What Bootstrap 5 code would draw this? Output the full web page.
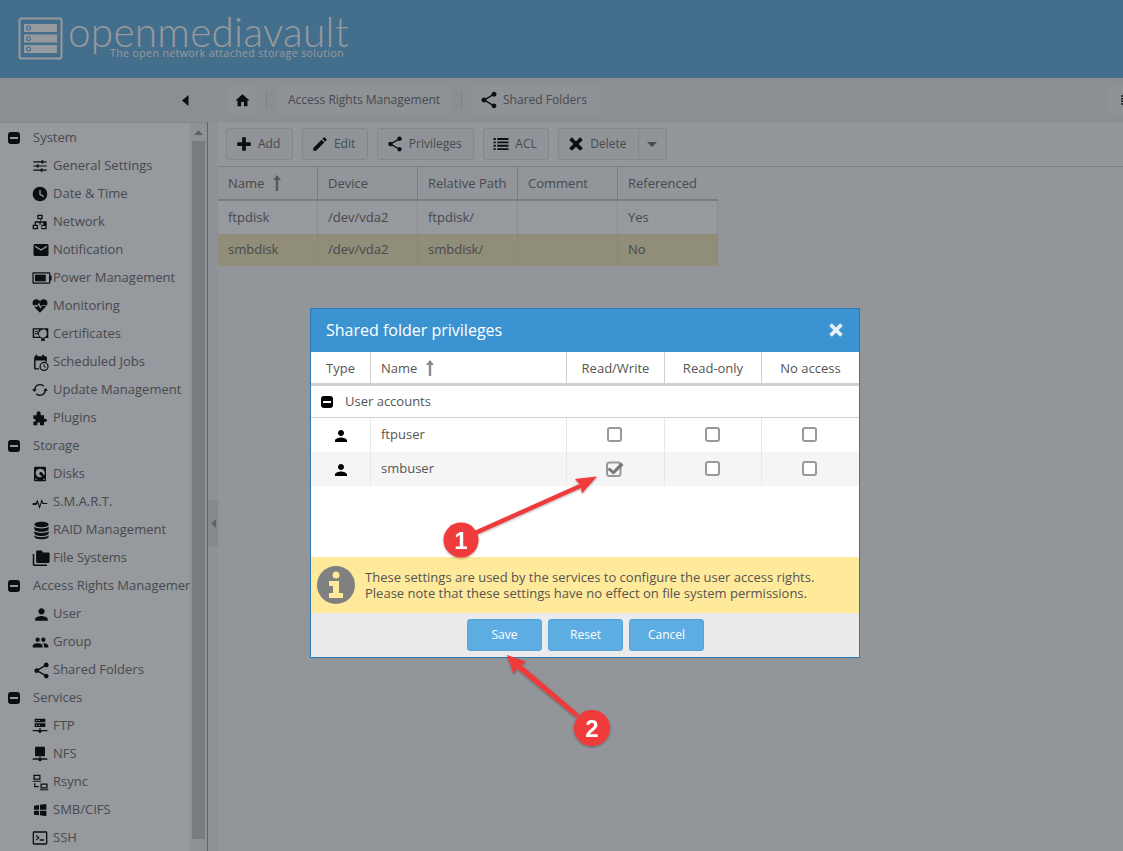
<!DOCTYPE html>
<html lang="en">
<head>
<meta charset="UTF-8">
<meta name="viewport" content="width=device-width, initial-scale=1.0">
<title>openmediavault - Shared folder privileges</title>
<link href="https://cdn.jsdelivr.net/npm/bootstrap@5.3.0/dist/css/bootstrap.min.css" rel="stylesheet">
<style>
  html, body { height: 100%; overflow: hidden; }
  body { font-family: "Open Sans", "Liberation Sans", sans-serif; font-size: 13px; color: #6e6e6e; background: #fff; }
  svg.ico { fill: #000; flex: none; }

  /* top banner */
  .omv-head { height: 78px; background: #68b0e0; padding-left: 18px; padding-top: 17px; color: #fff; }
  .omv-logo-text { font-family: "Lato", "Open Sans", sans-serif; font-weight: 300; font-size: 40.5px; line-height: 30px; height: 30px; letter-spacing: .25px; margin-left: 4px; }
  .omv-logo-sub { font-size: 10.5px; line-height: 12px; letter-spacing: .42px; margin-left: 46px; white-space: nowrap; }

  /* breadcrumb strip */
  .omv-strip { height: 44px; background: #ebebeb; }
  .omv-strip-left { width: 218px; padding-right: 29px; }
  .omv-crumbs { padding-left: 9px; }
  .omv-crumb { height: 30px; background: #f2f2f2; border: 1px solid #eee; border-radius: 3px; padding: 0 11px; white-space: nowrap; color: #6e6e6e; font-size: 12px; }
  .omv-crumb-home { width: 30px; padding: 0; }
  .omv-crumb-share { padding: 0 12px 0 7px; }
  .omv-crumb-share svg { margin-right: 4px; }
  .omv-crumb-sep { width: 1px; height: 14px; background: #ccc; margin: 0 9px; }
  .omv-crumb-end { width: 30px; margin-right: -14px; padding: 0 0 0 12px; }

  /* tree */
  .omv-main { height: 729px; background: #f7f7f7; }
  .omv-side { width: 208px; border-top: 1px solid #dcdcdc; border-right: 1px solid #7fa8cc; background: #fff; overflow: hidden; }
  .omv-tree { width: 190px; overflow: hidden; padding-top: 1px; }
  .omv-tree-row { height: 28px; white-space: nowrap; }
  .omv-tree-group { padding-left: 8px; }
  .omv-tree-group .omv-minus { margin-right: 13px; }
  .omv-tree-item { padding-left: 32px; }
  .omv-tree-icon { width: 21px; display: flex; }
  .omv-scroll { width: 17px; background: #f1f1f1; padding: 0 2px; }
  .omv-scroll-up { height: 18px; }
  .omv-scroll-thumb { height: 698px; background: #c8c8c8; }
  .omv-split { width: 10px; background: #f0f0f0; }
  .omv-split-handle { width: 10px; height: 47px; background: #e2e2e2; margin-top: 378px; }
  .omv-minus { width: 12px; height: 12px; background: #000; border-radius: 3px; padding: 0 2px; flex: none; }
  .omv-minus::after { content: ""; display: block; width: 100%; height: 2px; background: #fff; }

  /* toolbar */
  .omv-tools { height: 45px; padding: 6px 0 0 8px; gap: 9px; background: #fafafa; border-bottom: 1px solid #ccc; }
  .omv-tool { height: 32px; background: #f5f5f5; border: 1px solid #ddd; border-radius: 3px; padding: 0 11.6px 0 9px; color: #6e6e6e; white-space: nowrap; font-size: 12px; }
  .omv-tool > svg { width: 18px; height: 18px; margin: 0 5px 0 -1px; }
  .omv-tool-arrow { width: 28px; border-left: 1px solid #ddd; height: 100%; margin-left: 11px; }
  .omv-tool-del { padding-right: 0; }
  .omv-caret { width: 0; height: 0; border-left: 5px solid transparent; border-right: 5px solid transparent; border-top: 5px solid #6e6e6e; }

  /* grids */
  .omv-grid { table-layout: fixed; border-collapse: separate; border-spacing: 0; margin: 0; }
  .omv-grid th, .omv-grid td { padding: 0 10px; font-weight: 400; font-size: 13px; vertical-align: middle; background: transparent; box-shadow: none; color: #6e6e6e; }
  .omv-sorted svg { margin-left: 4px; vertical-align: -3px; }
  .omv-files { width: 500px; }
  .omv-files th { height: 34px; padding-top: 1px; border-bottom: 2px solid #ccc; border-right: 1px solid #ccc; }
  .omv-files td { height: 33px; border-bottom: 0; border-right: 1px solid #e9e9e9; background: #fff; }
  .omv-files tr.omv-picked td { height: 32px; background: #f4e9bc; border-right-color: #e9dfb0; }

  /* mask and dialog */
  .omv-mask { position: fixed; inset: 0; background: rgba(25, 30, 40, .456); }
  .omv-win { position: absolute; left: 310px; top: 308px; width: 550px; height: 350px; background: #fff; border: 1px solid #2d7ab5; }
  .omv-win-title { height: 43px; background: #3b94d1; color: #fff; font-size: 16px; padding: 0 14px 2px 15px; }
  .omv-win .omv-grid { width: 548px; }
  .omv-win .omv-grid th, .omv-win .omv-grid td { color: #555; }
  .omv-win .omv-grid th { height: 34px; padding-top: 2px; border-bottom: 3px solid #d0d0d0; border-right: 1px solid #d0d0d0; text-align: center; }
  .omv-win .omv-grid th:last-child, .omv-win .omv-grid td:last-child { border-right: 0; }
  .omv-win .omv-grid th.omv-left { text-align: left; }
  .omv-win td.omv-group { height: 32px; border-bottom: 1px solid #d0d0d0; }
  .omv-group-label { gap: 12px; }
  .omv-win td.omv-cell { height: 34px; border-bottom: 0; border-right: 1px solid #e8e8e8; text-align: center; }
  .omv-win tr.omv-alt td { background: #f5f5f5; }
  .omv-win td.omv-name { text-align: left; }
  .omv-win .omv-grid td.omv-pick { padding: 0 11px 2px 9px; }
  .omv-box { width: 15px; height: 15px; border: 2px solid #999; border-radius: 3px; display: inline-block; vertical-align: middle; background: #fff; }
  .omv-check { display: inline-block; vertical-align: middle; }
  .omv-win-space { height: 71px; }
  .omv-note { height: 56px; background: #ffe99a; padding-left: 6px; color: #555; line-height: 16px; font-size: 13px; }
  .omv-note svg { margin-right: 10px; }
  .omv-win-foot { height: 44px; background: #ebebeb; gap: 6px; padding-left: 156px; padding-top: 6px; }
  .omv-win-btn { width: 75px; height: 32px; background: #5dade2; border: 1px solid #54a5da; border-radius: 3px; color: #fff; font-size: 12px; padding: 0; }
  .omv-win-btn:hover { background: #5dade2; color: #fff; }
  .omv-notes { position: fixed; inset: 0; pointer-events: none; }
  .omv-notes text { font-family: "Liberation Sans", sans-serif; font-weight: 700; font-size: 24px; fill: #fff; text-anchor: middle; }
</style>
</head>
<body>

<svg width="0" height="0" class="position-absolute">
  <defs>
    <symbol id="i-home" viewBox="0 0 24 24"><path d="M10 20v-6h4v6h5v-8h3L12 3 2 12h3v8z"/></symbol>
    <symbol id="i-sliders" viewBox="0 0 24 24"><path d="M2 5h20v1.600H2zM2 11.200h20v1.600H2zM2 17.400h20V19H2z"/><rect x="14" y="3.400" width="3" height="4.800" rx=".6"/><rect x="7" y="9.600" width="3" height="4.800" rx=".6"/><rect x="13" y="15.800" width="3" height="4.800" rx=".6"/></symbol>
    <symbol id="i-clock" viewBox="0 0 24 24"><path fill-rule="evenodd" d="M12 1a11 11 0 1 0 0 22 11 11 0 0 0 0-22zm-1 5h2v6l5 3-1 1.700-6-3.700z"/></symbol>
    <symbol id="i-net" viewBox="0 0 24 24"><path fill-rule="evenodd" d="M8 1h8v7h-3v3h9v5h-.0v7h-8v-7h3v-3H13v3h-2v-3H6v3h3v7H1v-7h3v-5h8V8H8zm2 2v3h4V3zM3 18v3h4v-3zm14 0h-2v3h5v-3z"/></symbol>
    <symbol id="i-mail" viewBox="0 0 24 24"><path d="M20 4H4c-1.100 0-2 .9-2 2v12c0 1.100.9 2 2 2h16c1.100 0 2-.9 2-2V6c0-1.100-.9-2-2-2zm0 4l-8 5-8-5V6l8 5 8-5v2z"/></symbol>
    <symbol id="i-batt" viewBox="0 0 24 16"><path fill-rule="evenodd" d="M1.500 1h19.500a1 1 0 0 1 1 1v3h1.500v6H22v3a1 1 0 0 1-1 1H1.500a1 1 0 0 1-1-1V2a1 1 0 0 1 1-1zm.5 1.500v11h18.500v-11z"/><rect x="3.500" y="4" width="13" height="8"/></symbol>
    <symbol id="i-heart" viewBox="0 0 24 24"><path d="M12 22 3 13h5l1.500-3 3 6 2.500-4h6.500zM1.700 11C1 9.800.8 8.700.8 7.500.8 4.400 3.300 2 6.300 2c2.300 0 4.600 1.300 5.700 3.300C13.100 3.300 15.400 2 17.700 2c3 0 5.500 2.400 5.500 5.500 0 1.200-.2 2.300-.9 3.500h-7.400l-1.400 2.200-3-6L8 11z"/></symbol>
    <symbol id="i-cert" viewBox="0 0 24 24"><path fill-rule="evenodd" d="M1 3h22v14h-5v5l-2.500-1.500L13 22v-5H1zm2 2v10h7.500a6 6 0 0 1 0-10zm1.500 2h5v1.500h-5zm0 3h4v1.500h-4zm11-5.500-1.500 1.500h-2l-.7 2-1.800 1 .7 2-.7 2 1.800 1 .7 2h2l1.500 1.500 1.500-1.500h2l.7-2 1.100-.5V7.500l-1.100-.5-.7-2h-2z"/></symbol>
    <symbol id="i-cal" viewBox="0 0 24 24"><path fill-rule="evenodd" d="M5 1h2.500v2h7V1H17v2h2a2 2 0 0 1 2 2v6h-2V9H5v11h5v2H5a2 2 0 0 1-2-2V5a2 2 0 0 1 2-2z"/><path fill-rule="evenodd" d="M17 11a6.500 6.500 0 1 0 0 13 6.500 6.500 0 0 0 0-13zm0 1.800a4.700 4.700 0 1 1 0 9.400 4.700 4.700 0 0 1 0-9.400zm-.7 1.700v3.200l2.700 1.600.7-1.100-2.100-1.300v-2.400z"/></symbol>
    <symbol id="i-sync" viewBox="0 0 24 24"><path d="M12 5c-3.400 0-6.300 2.500-6.900 5.800H7L3.500 15 0 10.800h3C3.600 6.400 7.400 3 12 3c2.500 0 4.800 1 6.400 2.700L17 7.100C15.700 5.800 13.900 5 12 5zM20.500 9l3.500 4.200h-3C20.400 17.600 16.600 21 12 21c-2.500 0-4.800-1-6.400-2.700L7 16.900C8.300 18.200 10.100 19 12 19c3.400 0 6.300-2.500 6.900-5.800H17z"/></symbol>
    <symbol id="i-plug" viewBox="0 0 24 24"><path d="M2 8h5V5a3 3 0 0 1 6 0v3h5v5h2a2.500 2.500 0 0 1 0 5h-2v5h-6v-2.500a2 2 0 0 0-4 0V23H2v-5.500h1.500a2 2 0 0 0 0-4H2z"/></symbol>
    <symbol id="i-disk" viewBox="0 0 24 24"><path fill-rule="evenodd" d="M5 1h14a2 2 0 0 1 2 2v18a2 2 0 0 1-2 2H5a2 2 0 0 1-2-2V3a2 2 0 0 1 2-2zm7 3a6.500 6.500 0 1 0 3 12.300L13 14a2.500 2.500 0 1 1 3-2.500l2.300 2.200A6.500 6.500 0 0 0 12 4zM5 19v2h2v-2zm12 0v2h2v-2z"/></symbol>
    <symbol id="i-smart" viewBox="0 0 24 24"><path d="M1 13.500h4.500l2.500-5 3.500 9 3-10 2.500 6H23v1.500h-7.500l-1-2.500-3 10-3.500-9-1.500 3H1z"/></symbol>
    <symbol id="i-db" viewBox="0 0 24 24"><path d="M12 1C6.500 1 3 2.600 3 4.500S6.500 8 12 8s9-1.600 9-3.500S17.500 1 12 1zM3 7v3c0 1.900 3.500 3.500 9 3.500s9-1.600 9-3.500V7c-1.500 1.700-5 2.500-9 2.500S4.500 8.700 3 7zm0 5.500v3c0 1.900 3.500 3.500 9 3.500s9-1.600 9-3.500v-3c-1.500 1.700-5 2.500-9 2.500s-7.500-.8-9-2.500zM3 18v1.500C3 21.400 6.500 23 12 23s9-1.600 9-3.500V18c-1.500 1.700-5 2.500-9 2.500S4.500 19.700 3 18z"/></symbol>
    <symbol id="i-folders" viewBox="0 0 24 24"><path d="M7 2h6l2 2.500h7A1.500 1.500 0 0 1 23.500 6v11a1.500 1.500 0 0 1-1.500 1.500H7A1.500 1.500 0 0 1 5.500 17V3.500A1.500 1.500 0 0 1 7 2z"/><path d="M1 6.500h2V20.500h17V22.500H2.500A1.500 1.500 0 0 1 1 21z"/></symbol>
    <symbol id="i-user" viewBox="0 0 24 24"><path d="M12 12c2.210 0 4-1.790 4-4s-1.790-4-4-4-4 1.790-4 4 1.790 4 4 4zm0 2c-2.670 0-8 1.340-8 4v2h16v-2c0-2.660-5.330-4-8-4z"/></symbol>
    <symbol id="i-group" viewBox="0 0 24 24"><path d="M16 11c1.660 0 2.990-1.340 2.990-3S17.660 5 16 5c-1.660 0-3 1.340-3 3s1.340 3 3 3zm-8 0c1.660 0 2.990-1.340 2.990-3S9.660 5 8 5C6.340 5 5 6.340 5 8s1.340 3 3 3zm0 2c-2.330 0-7 1.170-7 3.500V19h14v-2.500c0-2.330-4.670-3.500-7-3.500zm8 0c-.29 0-.62.020-.97.050 1.160.84 1.970 1.970 1.970 3.450V19h6v-2.500c0-2.330-4.670-3.500-7-3.500z"/></symbol>
    <symbol id="i-share" viewBox="0 0 24 24"><path d="M18 16.080c-.76 0-1.440.3-1.960.77L8.910 12.700c.05-.23.09-.46.09-.7s-.04-.47-.09-.7l7.050-4.110c.54.5 1.250.81 2.040.81 1.660 0 3-1.340 3-3s-1.340-3-3-3-3 1.340-3 3c0 .24.040.47.090.7L8.040 9.810C7.500 9.310 6.790 9 6 9c-1.660 0-3 1.340-3 3s1.340 3 3 3c.79 0 1.500-.31 2.040-.81l7.120 4.160c-.05.210-.08.430-.08.650 0 1.610 1.310 2.920 2.920 2.920 1.610 0 2.920-1.310 2.920-2.920s-1.310-2.920-2.920-2.920z"/></symbol>
    <symbol id="i-ftp" viewBox="0 0 24 24"><path fill-rule="evenodd" d="M4 1h16v5.500H4zm2 2v1.500h2V3zm4 0v1.500h2V3zM4 8h16v5.500H4zm2 2v1.500h2V10zm4 0v1.500h2V10zM11 15h2v3h10v2H14.500a2.500 2.500 0 0 1-5 0H1v-2h10z"/></symbol>
    <symbol id="i-nfs" viewBox="0 0 24 24"><path d="M6 1h12a1.500 1.500 0 0 1 1.500 1.500V14a1.500 1.500 0 0 1-1.500 1.500H6A1.500 1.500 0 0 1 4.500 14V2.500A1.500 1.500 0 0 1 6 1zM11 16h2v2.500h10v2H14.500a2.500 2.500 0 0 1-5 0H1v-2h10z"/></symbol>
    <symbol id="i-rsync" viewBox="0 0 24 24"><path fill-rule="evenodd" d="M2 1h10v7H2zm1.800 1.800v3.400h6.400V2.800zM1 9.500h12v1.500H1zM12 13.500h10v7H12zm1.800 1.800v3.400h6.400v-3.400zM11 21.500h12V23H11zM3 13h1.800v4H9.500v1.800H3z"/></symbol>
    <symbol id="i-win" viewBox="0 0 24 24"><path d="M3 5.500l7.500-1v7H3zM12 4.200L21.500 3v8.500H12zM3 13h7.500v7L3 19zM12 13h9.500v8.500L12 20z"/></symbol>
    <symbol id="i-ssh" viewBox="0 0 24 24"><path fill-rule="evenodd" d="M3 2h18a2 2 0 0 1 2 2v16a2 2 0 0 1-2 2H3a2 2 0 0 1-2-2V4a2 2 0 0 1 2-2zm0 2v16h18V4zm3 3 5.500 4.500L6 16v-2.300l3-2.200-3-2.200zm5.500 7H18v2h-6.500z"/></symbol>
    <symbol id="i-edit" viewBox="0 0 24 24"><path d="M3 17.250V21h3.750L17.810 9.940l-3.750-3.750L3 17.250zM20.710 7.040c.39-.39.39-1.020 0-1.410l-2.340-2.340c-.39-.39-1.020-.39-1.410 0l-1.830 1.830 3.750 3.750 1.830-1.830z"/></symbol>
    <symbol id="i-plus" viewBox="0 0 24 24"><path d="M9.500 3h5v6.500H21v5h-6.500V21h-5v-6.500H3v-5h6.500z"/></symbol>
    <symbol id="i-x" viewBox="0 0 24 24"><path d="M6.500 3 12 8.500 17.500 3 21 6.500 15.500 12l5.500 5.500-3.500 3.500L12 15.500 6.500 21 3 17.500 8.500 12 3 6.500z"/></symbol>
    <symbol id="i-list" viewBox="0 0 24 24"><path d="M2 4h3v2.500H2zM7 4h15v2.500H7zM2 8.500h3V11H2zM7 8.500h15V11H7zM2 13h3v2.500H2zM7 13h15v2.500H7zM2 17.500h3V20H2zM7 17.500h15V20H7z"/></symbol>
    <symbol id="i-sort" viewBox="0 0 10 16"><path d="M5 0 9 5H6.200v11H3.800V5H1z"/></symbol>
  </defs>
</svg>

<header class="omv-head d-flex align-items-start">
  <svg width="46" height="44" viewBox="0 0 46 44" class="flex-shrink-0">
    <rect x="1.500" y="1.500" width="42" height="40" rx="2" fill="none" stroke="#fff" stroke-width="2"/>
    <g fill="#fff">
      <rect x="6" y="7" width="33" height="8"/><rect x="6" y="17.500" width="33" height="8"/><rect x="6" y="28" width="33" height="8"/>
    </g>
    <g fill="none" stroke="#68b0e0" stroke-width="1.200">
      <circle cx="10.500" cy="11" r="2"/><circle cx="10.500" cy="21.500" r="2"/><circle cx="10.500" cy="32" r="2"/>
    </g>
  </svg>
  <div>
    <div class="omv-logo-text">openmediavault</div>
    <div class="omv-logo-sub">The open network attached storage solution</div>
  </div>
</header>

<div class="omv-strip d-flex align-items-center">
  <div class="omv-strip-left d-flex justify-content-end">
    <svg width="7" height="11" viewBox="0 0 7 11"><path d="M6.500 0v11L0 5.500z" fill="#000"/></svg>
  </div>
  <div class="omv-crumbs flex-grow-1 d-flex align-items-center">
    <div class="omv-crumb omv-crumb-home d-flex align-items-center justify-content-center"><svg class="ico" width="17" height="17"><use href="#i-home"/></svg></div>
    <span class="omv-crumb-sep"></span>
    <div class="omv-crumb d-flex align-items-center">Access Rights Management</div>
    <span class="omv-crumb-sep"></span>
    <div class="omv-crumb omv-crumb-share d-flex align-items-center"><svg class="ico" width="20" height="20"><use href="#i-share"/></svg>Shared Folders</div>
    <div class="omv-crumb omv-crumb-end d-flex align-items-center ms-auto"><svg class="ico" width="14" height="14"><use href="#i-list"/></svg></div>
  </div>
</div>

<div class="omv-main d-flex">
  <aside class="omv-side d-flex flex-shrink-0">
    <nav class="omv-tree flex-shrink-0">
      <div class="omv-tree-row omv-tree-group d-flex align-items-center"><span class="omv-minus d-flex align-items-center"></span>System</div>
      <div class="omv-tree-row omv-tree-item d-flex align-items-center"><span class="omv-tree-icon"><svg class="ico" width="16" height="16"><use href="#i-sliders"/></svg></span>General Settings</div>
      <div class="omv-tree-row omv-tree-item d-flex align-items-center"><span class="omv-tree-icon"><svg class="ico" width="16" height="16"><use href="#i-clock"/></svg></span>Date &amp; Time</div>
      <div class="omv-tree-row omv-tree-item d-flex align-items-center"><span class="omv-tree-icon"><svg class="ico" width="16" height="16"><use href="#i-net"/></svg></span>Network</div>
      <div class="omv-tree-row omv-tree-item d-flex align-items-center"><span class="omv-tree-icon"><svg class="ico" width="18" height="18"><use href="#i-mail"/></svg></span>Notification</div>
      <div class="omv-tree-row omv-tree-item d-flex align-items-center"><span class="omv-tree-icon"><svg class="ico" width="20" height="14"><use href="#i-batt"/></svg></span>Power Management</div>
      <div class="omv-tree-row omv-tree-item d-flex align-items-center"><span class="omv-tree-icon"><svg class="ico" width="16" height="16"><use href="#i-heart"/></svg></span>Monitoring</div>
      <div class="omv-tree-row omv-tree-item d-flex align-items-center"><span class="omv-tree-icon"><svg class="ico" width="17" height="17"><use href="#i-cert"/></svg></span>Certificates</div>
      <div class="omv-tree-row omv-tree-item d-flex align-items-center"><span class="omv-tree-icon"><svg class="ico" width="17" height="17"><use href="#i-cal"/></svg></span>Scheduled Jobs</div>
      <div class="omv-tree-row omv-tree-item d-flex align-items-center"><span class="omv-tree-icon"><svg class="ico" width="16" height="16"><use href="#i-sync"/></svg></span>Update Management</div>
      <div class="omv-tree-row omv-tree-item d-flex align-items-center"><span class="omv-tree-icon"><svg class="ico" width="16" height="16"><use href="#i-plug"/></svg></span>Plugins</div>
      <div class="omv-tree-row omv-tree-group d-flex align-items-center"><span class="omv-minus d-flex align-items-center"></span>Storage</div>
      <div class="omv-tree-row omv-tree-item d-flex align-items-center"><span class="omv-tree-icon"><svg class="ico" width="16" height="16"><use href="#i-disk"/></svg></span>Disks</div>
      <div class="omv-tree-row omv-tree-item d-flex align-items-center"><span class="omv-tree-icon"><svg class="ico" width="16" height="16"><use href="#i-smart"/></svg></span>S.M.A.R.T.</div>
      <div class="omv-tree-row omv-tree-item d-flex align-items-center"><span class="omv-tree-icon"><svg class="ico" width="19" height="19"><use href="#i-db"/></svg></span>RAID Management</div>
      <div class="omv-tree-row omv-tree-item d-flex align-items-center"><span class="omv-tree-icon"><svg class="ico" width="18" height="18"><use href="#i-folders"/></svg></span>File Systems</div>
      <div class="omv-tree-row omv-tree-group d-flex align-items-center"><span class="omv-minus d-flex align-items-center"></span>Access Rights Management</div>
      <div class="omv-tree-row omv-tree-item d-flex align-items-center"><span class="omv-tree-icon"><svg class="ico" width="19" height="19"><use href="#i-user"/></svg></span>User</div>
      <div class="omv-tree-row omv-tree-item d-flex align-items-center"><span class="omv-tree-icon"><svg class="ico" width="17" height="17"><use href="#i-group"/></svg></span>Group</div>
      <div class="omv-tree-row omv-tree-item d-flex align-items-center"><span class="omv-tree-icon"><svg class="ico" width="19" height="19"><use href="#i-share"/></svg></span>Shared Folders</div>
      <div class="omv-tree-row omv-tree-group d-flex align-items-center"><span class="omv-minus d-flex align-items-center"></span>Services</div>
      <div class="omv-tree-row omv-tree-item d-flex align-items-center"><span class="omv-tree-icon"><svg class="ico" width="16" height="16"><use href="#i-ftp"/></svg></span>FTP</div>
      <div class="omv-tree-row omv-tree-item d-flex align-items-center"><span class="omv-tree-icon"><svg class="ico" width="16" height="16"><use href="#i-nfs"/></svg></span>NFS</div>
      <div class="omv-tree-row omv-tree-item d-flex align-items-center"><span class="omv-tree-icon"><svg class="ico" width="17" height="17"><use href="#i-rsync"/></svg></span>Rsync</div>
      <div class="omv-tree-row omv-tree-item d-flex align-items-center"><span class="omv-tree-icon"><svg class="ico" width="16" height="16"><use href="#i-win"/></svg></span>SMB/CIFS</div>
      <div class="omv-tree-row omv-tree-item d-flex align-items-center"><span class="omv-tree-icon"><svg class="ico" width="16" height="16"><use href="#i-ssh"/></svg></span>SSH</div>
    </nav>
    <div class="omv-scroll flex-grow-1">
      <div class="omv-scroll-up d-flex justify-content-center align-items-center"><svg width="9" height="5" viewBox="0 0 9 5"><path d="M4.500 0 9 5H0z" fill="#999"/></svg></div>
      <div class="omv-scroll-thumb"></div>
    </div>
  </aside>
  <div class="omv-split flex-shrink-0">
    <div class="omv-split-handle d-flex align-items-center justify-content-center">
      <svg width="5" height="9" viewBox="0 0 5 9"><path d="M5 0v9L0 4.500z" fill="#999"/></svg>
    </div>
  </div>
  <main class="flex-grow-1">
    <div class="omv-tools d-flex align-items-start">
      <div class="omv-tool d-flex align-items-center"><svg class="ico"><use href="#i-plus"/></svg>Add</div>
      <div class="omv-tool d-flex align-items-center"><svg class="ico"><use href="#i-edit"/></svg>Edit</div>
      <div class="omv-tool d-flex align-items-center"><svg class="ico"><use href="#i-share"/></svg>Privileges</div>
      <div class="omv-tool d-flex align-items-center"><svg class="ico"><use href="#i-list"/></svg>ACL</div>
      <div class="omv-tool omv-tool-del d-flex align-items-center"><svg class="ico"><use href="#i-x"/></svg>Delete<span class="omv-tool-arrow d-flex align-items-center justify-content-center"><span class="omv-caret"></span></span></div>
    </div>
    <table class="table omv-grid omv-files">
      <thead>
        <tr>
          <th class="omv-sorted">Name <svg width="10" height="16" fill="#8a8a8a"><use href="#i-sort"/></svg></th>
          <th>Device</th>
          <th>Relative Path</th>
          <th>Comment</th>
          <th class="border-end-0">Referenced</th>
        </tr>
      </thead>
      <tbody>
        <tr><td>ftpdisk</td><td>/dev/vda2</td><td>ftpdisk/</td><td></td><td>Yes</td></tr>
        <tr class="omv-picked"><td>smbdisk</td><td>/dev/vda2</td><td>smbdisk/</td><td></td><td>No</td></tr>
      </tbody>
    </table>
  </main>
</div>

<div class="omv-mask"></div>

<section class="omv-win">
  <div class="omv-win-title d-flex align-items-center justify-content-between">
    <span>Shared folder privileges</span>
    <svg width="18" height="18" fill="#e4f0f8"><use href="#i-x"/></svg>
  </div>
  <table class="table omv-grid">
    <colgroup><col style="width:60px"><col style="width:196px"><col style="width:98px"><col style="width:97px"><col></colgroup>
    <thead>
      <tr>
        <th>Type</th>
        <th class="omv-left omv-sorted">Name <svg width="10" height="16" fill="#8a8a8a"><use href="#i-sort"/></svg></th>
        <th>Read/Write</th>
        <th>Read-only</th>
        <th>No access</th>
      </tr>
    </thead>
    <tbody>
      <tr><td colspan="5" class="omv-group"><span class="omv-group-label d-flex align-items-center"><span class="omv-minus d-flex align-items-center"></span>User accounts</span></td></tr>
      <tr>
        <td class="omv-cell"><svg class="ico" width="18" height="18"><use href="#i-user"/></svg></td>
        <td class="omv-cell omv-name">ftpuser</td>
        <td class="omv-cell omv-pick"><span class="omv-box"></span></td>
        <td class="omv-cell omv-pick"><span class="omv-box"></span></td>
        <td class="omv-cell omv-pick"><span class="omv-box"></span></td>
      </tr>
      <tr class="omv-alt">
        <td class="omv-cell"><svg class="ico" width="18" height="18"><use href="#i-user"/></svg></td>
        <td class="omv-cell omv-name">smbuser</td>
        <td class="omv-cell omv-pick">
          <svg class="omv-check" width="18" height="16" viewBox="0 0 18 16"><rect x="1" y="1.500" width="13.500" height="13.500" rx="2.500" fill="none" stroke="#999" stroke-width="2"/><path d="M3.500 6.500l3.800 3.300L15 1.500l2.500 2.500L7.500 13.500 1.500 8.500z" fill="#777"/></svg>
        </td>
        <td class="omv-cell omv-pick"><span class="omv-box"></span></td>
        <td class="omv-cell omv-pick"><span class="omv-box"></span></td>
      </tr>
    </tbody>
  </table>
  <div class="omv-win-space"></div>
  <div class="omv-note d-flex align-items-center">
    <svg width="38" height="38" viewBox="0 0 38 38">
      <circle cx="19" cy="19" r="19" fill="#808080"/>
      <circle cx="19" cy="9" r="3.500" fill="#ffe99a"/>
      <path d="M12 15h10v12h4v5H12v-5h4v-7h-4z" fill="#ffe99a"/>
    </svg>
    <div>These settings are used by the services to configure the user access rights.<br>Please note that these settings have no effect on file system permissions.</div>
  </div>
  <div class="omv-win-foot d-flex align-items-start">
    <button class="btn omv-win-btn" type="button">Save</button>
    <button class="btn omv-win-btn" type="button">Reset</button>
    <button class="btn omv-win-btn" type="button">Cancel</button>
  </div>
</section>

<svg class="omv-notes" width="1123" height="851" viewBox="0 0 1123 851">
  <defs>
    <filter id="omv-soft" x="-20%" y="-20%" width="140%" height="140%"><feDropShadow dx="0" dy="1" stdDeviation="1.200" flood-color="#000" flood-opacity=".35"/></filter>
  </defs>
  <g fill="#ef3b3b" filter="url(#omv-soft)">
    <path d="M473 531.500 579.500 484 575 479 597 476.500 582 493.500 581 488 475 535.500z"/>
    <path d="M576 717.500 517 668.500 513.500 674 507 655 526 661.500 521.500 665 579 714z"/>
    <circle cx="461" cy="540" r="17.500"/>
    <circle cx="592" cy="728" r="18"/>
  </g>
  <text x="461" y="549">1</text>
  <text x="592" y="737">2</text>
</svg>

<script src="https://cdn.jsdelivr.net/npm/bootstrap@5.3.0/dist/js/bootstrap.bundle.min.js"></script>
</body>
</html>
